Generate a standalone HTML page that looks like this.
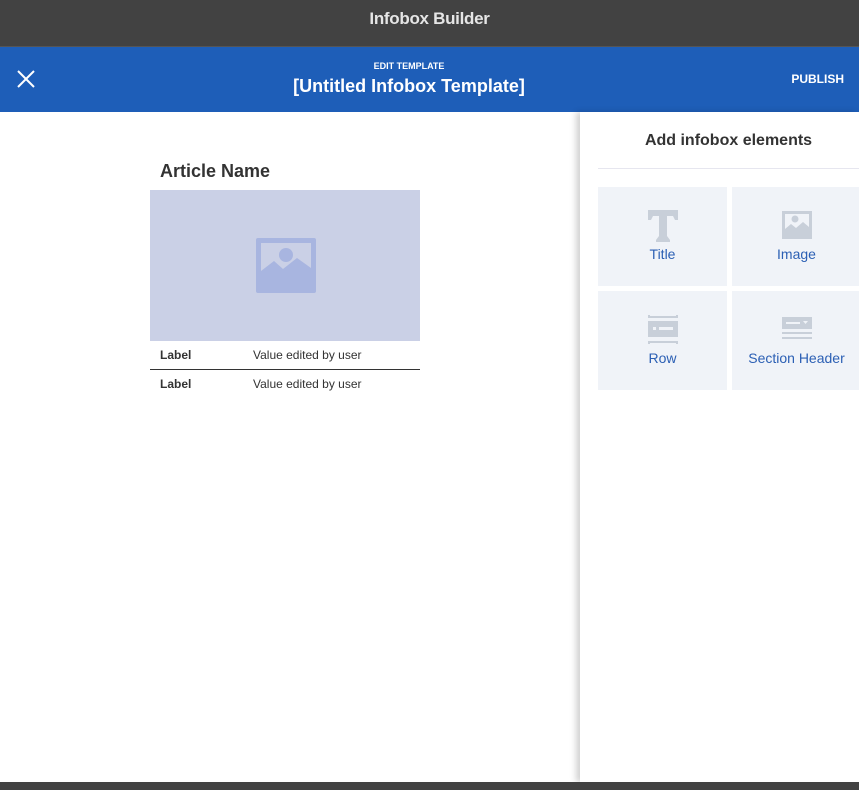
<!DOCTYPE html>
<html><head><meta charset="utf-8"><style>
*{margin:0;padding:0;box-sizing:border-box}
body{width:859px;height:790px;overflow:hidden;background:#fff;font-family:"Liberation Sans",Arial,sans-serif;position:relative}
.top{position:absolute;left:0;top:0;width:859px;height:47px;background:#424242;border-bottom:1px solid #555;color:#e6e6e6;font-weight:bold;font-size:17px;text-align:center;line-height:38px;letter-spacing:-0.3px}
.blue{position:absolute;left:0;top:47px;width:859px;height:65px;background:#1e5eb8;color:#fff}
.sub{position:absolute;left:0;width:818px;text-align:center;top:14px;font-size:9px;font-weight:bold}
.ttl{position:absolute;left:0;width:818px;text-align:center;top:29px;font-size:18px;font-weight:bold}
.pub{position:absolute;right:15px;top:25px;font-size:12px;font-weight:bold}
.bottom{position:absolute;left:0;top:782px;width:859px;height:8px;background:#424242}
.panel{position:absolute;left:580px;top:112px;width:279px;height:670px;background:#fff;box-shadow:-4px 0 6px rgba(0,0,0,0.18)}
.ph{position:absolute;left:18px;top:20px;width:261px;text-align:center;font-weight:bold;font-size:16px;color:#333}
.hr{position:absolute;left:18px;top:56px;width:261px;height:1px;background:#e6e6ef}
.tile{position:absolute;width:129px;height:99px;background:#f0f3f8;color:#2b5fb4;font-size:14px;text-align:center}
.tile svg{position:absolute;left:50%;transform:translateX(-50%)}
.tile span{position:absolute;left:0;right:0;top:59px}
.art{position:absolute;left:160px;top:161px;font-size:18px;font-weight:bold;color:#333}
.img{position:absolute;left:150px;top:190px;width:270px;height:151px;background:#cad0e6}
.row{position:absolute;left:150px;width:270px;font-size:12px;color:#333}
.row b{position:absolute;left:10px}
.row i{position:absolute;left:103px;font-style:normal}
</style></head><body>
<div class="top">Infobox Builder</div>
<div class="blue">
<svg style="position:absolute;left:16px;top:22px" width="20" height="20" viewBox="0 0 20 20"><path d="M2 2L18 18M18 2L2 18" stroke="#fff" stroke-width="2"/></svg>
<div class="sub">EDIT TEMPLATE</div>
<div class="ttl">[Untitled Infobox Template]</div>
<div class="pub">PUBLISH</div>
</div>
<div class="art">Article Name</div>
<div class="img">
<svg style="position:absolute;left:106px;top:48px" width="60" height="55" viewBox="0 0 60 55"><rect width="60" height="55" rx="2" fill="#a8b5e0"/><rect x="5" y="5" width="50" height="45" fill="#cad0e6"/><path d="M5 33L18 23L27 31L41 20L55 30L55 50L5 50Z" fill="#a8b5e0"/><circle cx="30" cy="17" r="7" fill="#a8b5e0"/></svg>
</div>
<div class="row" style="top:348px"><b>Label</b><i>Value edited by user</i></div>
<div style="position:absolute;left:150px;top:369px;width:270px;height:1px;background:#333"></div>
<div class="row" style="top:377px"><b>Label</b><i>Value edited by user</i></div>
<div class="panel">
<div class="ph">Add infobox elements</div>
<div class="hr"></div>
<div class="tile" style="left:18px;top:75px"><svg style="top:23px" width="30" height="32" viewBox="0 0 30 32"><path d="M0 0H30V10H27L25 6H19V26L22 30V32H8V30L11 26V6H5L3 10H0Z" fill="#c8cfd9"/></svg><span>Title</span></div>
<div class="tile" style="left:152px;top:75px"><svg style="top:24px" width="30" height="28" viewBox="0 0 30 28"><rect width="30" height="28" fill="#c8cfd9"/><rect x="3" y="3" width="24" height="22" fill="#f0f3f8"/><path d="M3 18L9 13L14 17L21 11L27 16V25H3Z" fill="#c8cfd9"/><circle cx="13" cy="8" r="3.5" fill="#c8cfd9"/></svg><span>Image</span></div>
<div class="tile" style="left:18px;top:179px"><svg style="top:24px" width="30" height="29" viewBox="0 0 30 29"><path d="M0 0V3H30V0H28V1H2V0Z M0 29V26H30V29H28V28H2V29Z" fill="#c8cfd9"/><rect x="0" y="6" width="30" height="16" fill="#c8cfd9"/><rect x="5" y="12" width="3" height="3" fill="#f0f3f8"/><rect x="11" y="12" width="14" height="3" fill="#f0f3f8"/></svg><span>Row</span></div>
<div class="tile" style="left:152px;top:179px"><svg style="top:26px" width="30" height="23" viewBox="0 0 30 23"><rect width="30" height="12" fill="#c8cfd9"/><rect x="4" y="5" width="14" height="2" fill="#f0f3f8"/><path d="M21 4H26L23.5 7Z" fill="#f0f3f8"/><rect y="15" width="30" height="2" fill="#c8cfd9"/><rect y="20" width="30" height="2" fill="#c8cfd9"/></svg><span>Section Header</span></div>
</div>
<div class="bottom"></div>
</body></html>
